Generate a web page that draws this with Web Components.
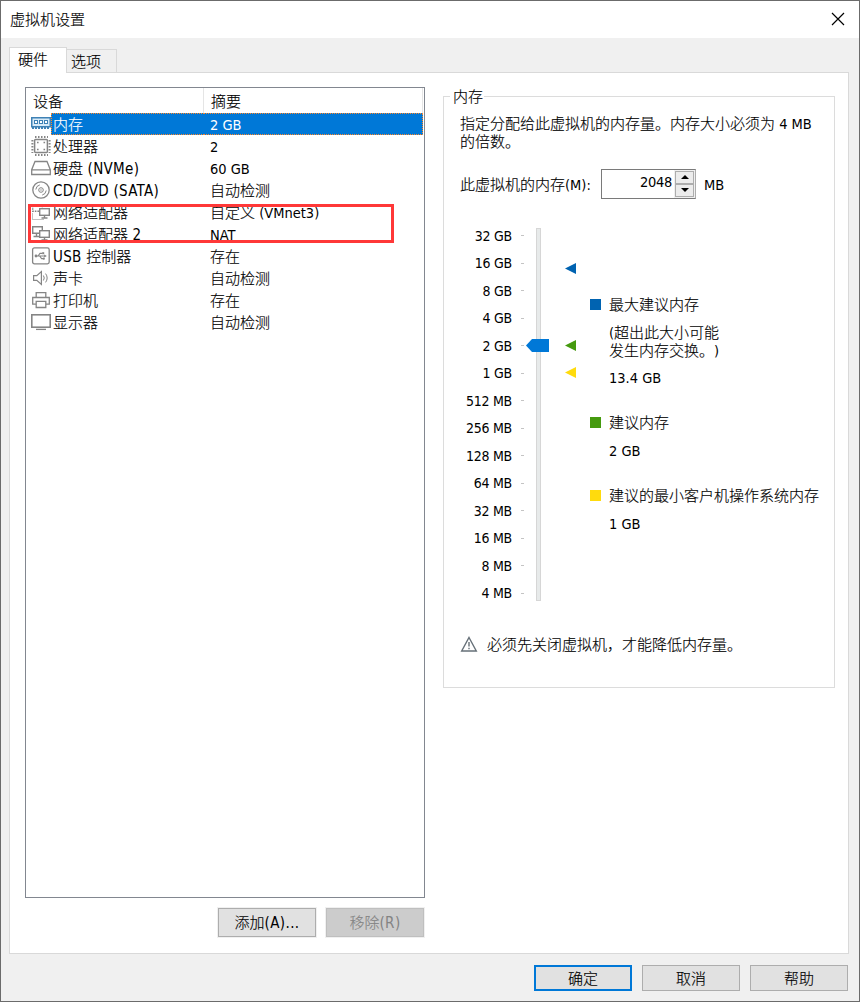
<!DOCTYPE html>
<html lang="zh-CN">
<head>
<meta charset="utf-8">
<title>虚拟机设置</title>
<style>
    html, body {
        margin: 0;
        padding: 0;
        background: #f0f0f0;
    }
    body {
        font-family: "Noto Sans CJK SC", "Noto Sans", sans-serif;
        font-size: 15px;
        line-height: 18px;
        color: #000;
        text-spacing-trim: space-all;
    }
</style>
</head>
<body>
<vm-dialog></vm-dialog>
<script>
// Latin runs use their own face next to the Chinese text
const BASE = `
    *, *::before, *::after { box-sizing: border-box; }
    .t { white-space: pre; font-weight: 300; -webkit-text-stroke: .15px currentColor; }
    .l {
        font-family: "DejaVu Sans Condensed", "DejaVu Sans", sans-serif;
        font-stretch: condensed;
        font-size: 14.5px;
        line-height: 1px;
        font-weight: 400;
        -webkit-text-stroke: 0;
    }
`;

function runs(text) {
    const inner = text.replace(/[\x20-\x7e]+/g, m => `<span class="l">${m}</span>`);
    return `<span class="t">${inner}</span>`;
}

const ICONS = {
    memory: `<rect x="0.75" y="3.75" width="18.5" height="9" fill="#d8ebf8" stroke="#3f82b5" stroke-width="1.5"/>
        <g fill="#fff" stroke="#3f82b5"><rect x="3.5" y="6.5" width="3" height="3"/><rect x="8.5" y="6.5" width="3" height="3"/><rect x="13.5" y="6.5" width="3" height="3"/></g>
        <path d="M1 14h18" stroke="#3f82b5" stroke-width="2" stroke-dasharray="2 1"/>`,
    cpu: `<rect x="3.6" y="3.6" width="12.8" height="12.8" rx="1" stroke-width="1.5"/>
        <path d="M4 1h13M4 19h13" stroke-width="2" stroke-dasharray="1.5 1.5"/>
        <path d="M1.4 4v13M18.6 4v13" stroke-width="2" stroke-dasharray="1.5 1.5"/>
        <path d="M6 6.5h1.6M12.5 6.5h1.6M6 13.5h1.6M12.5 13.5h1.6" stroke-width="1.4"/>`,
    disk: `<path d="M4 3.5h12l3.3 8.2v4.8H.7v-4.8zM.7 11.8h18.6" stroke-width="1.3"/>`,
    disc: `<circle cx="10" cy="10" r="8.2" stroke-width="1.3"/><circle cx="10" cy="10" r="2.3"/><circle cx="10" cy="10" r=".7" fill="#858585" stroke="none"/>
        <path d="M4.8 9.5a5.3 5.3 0 0 1 4-4.6M15.2 10.5a5.3 5.3 0 0 1-4 4.6"/>`,
    netOff: `<path d="M8 9.3H1.7V2.7h9.6v3.6" stroke-width="1.4" stroke-dasharray="1.6 1"/>
        <rect x="8.7" y="6.7" width="9.6" height="6.6" stroke-width="1.4"/><path d="M13.5 13.5v2M10.5 16h6" stroke-width="1.4"/>
        <path d="M1.5 11.5v6h11" stroke-dasharray="1 1"/>`,
    net: `<path d="M8 9.3H1.7V2.7h9.6v3.6" stroke-width="1.4"/><path d="M5.5 9.5v3.2M2.5 12.5H8" stroke-width="1.4"/>
        <rect x="8.7" y="6.7" width="9.6" height="6.6" stroke-width="1.4"/><path d="M13.5 13.5v2M10.5 16h6" stroke-width="1.4"/>`,
    usb: `<rect x="1.6" y="1.9" width="16.6" height="16" rx="1.8" stroke-width="1.3"/>
        <path d="M4.5 10h10M7 10l2-2.6h2.4M8.6 10l2 2.6h2" stroke-width="1.1"/><circle cx="5" cy="10" r="1.4" fill="#858585" stroke="none"/>
        <path d="M13.2 8.4L15.8 10l-2.6 1.6z" fill="#858585" stroke="none"/><rect x="11.2" y="6.2" width="2" height="2" fill="#858585" stroke="none"/><circle cx="12.8" cy="12.7" r="1.1" fill="#858585" stroke="none"/>`,
    sound: `<path d="M2.6 7.7h3.2l4.6-4.2v13L5.8 12.3H2.6z" stroke-width="1.2"/><path d="M12.4 7.5q1.7 2.5 0 5M14.6 5.6q3.1 4.4 0 8.8"/>`,
    printer: `<path d="M5.2 7.3V2.6h9.6v4.7M5 14.2H1.7V7.5h16.6v6.7H15" stroke-width="1.3"/><path d="M5.2 11.4h9.6v6.1H5.2z" stroke-width="1.3"/>`,
    display: `<rect x=".8" y="2.8" width="18.4" height="12.4" stroke-width="1.6"/><path d="M5 17.4h10" stroke-width="1.3"/>`,
};

/**
 * Web Component: <device-icon>
 */
class DeviceIcon extends HTMLElement {
    constructor() {
        super();
        this.attachShadow({ mode: 'open' });
    }

    connectedCallback() {
        this.shadowRoot.innerHTML = `
            <style>
                :host { display: block; width: 20px; height: 20px; flex: none; }
                svg { display: block; }
            </style>
            <svg width="20" height="20" viewBox="0 0 20 20" fill="none" stroke="#858585">${ICONS[this.getAttribute('name')]}</svg>
        `;
    }
}
customElements.define('device-icon', DeviceIcon);

/**
 * Web Component: <device-list>
 * Two column list of the hardware with its header.
 */
class DeviceList extends HTMLElement {
    constructor() {
        super();
        this.attachShadow({ mode: 'open' });
    }

    connectedCallback() {
        const rows = [
            ['memory', '内存', '2 GB'],
            ['cpu', '处理器', '2'],
            ['disk', '硬盘 (NVMe)', '60 GB'],
            ['disc', 'CD/DVD (SATA)', '自动检测'],
            ['netOff', '网络适配器', '自定义 (VMnet3)'],
            ['net', '网络适配器 2', 'NAT'],
            ['usb', 'USB 控制器', '存在'],
            ['sound', '声卡', '自动检测'],
            ['printer', '打印机', '存在'],
            ['display', '显示器', '自动检测'],
        ];
        this.shadowRoot.innerHTML = `
            <style>
                ${BASE}
                :host {
                    display: block;
                    position: relative;
                    box-sizing: border-box;
                    width: 400px;
                    height: 811px;
                    border: 1px solid #828790;
                    background: #fff;
                }
                .head {
                    display: grid;
                    grid-template-columns: 178px 219px;
                    height: 25px;
                    line-height: 25px;
                }
                .head div {
                    border-right: 1px solid #e5e5e5;
                    padding-left: 7px;
                }
                .row {
                    display: grid;
                    grid-template-columns: 25px 153px 1fr;
                    height: 22px;
                    line-height: 21px;
                    padding-right: 1px;
                }
                .name .l { font-size: 15px; letter-spacing: .3px; }
                device-icon { margin: 1px 0 0 5px; }
                .name { padding-left: 2px; }
                .info { padding-left: 6px; }
                .row.on .name, .row.on .info {
                    background: #0078d7;
                    color: #fff;
                    border: 1px dotted #ff8728;
                    line-height: 19px;
                }
                .row.on .name { border-right: 0; padding-left: 1px; }
                .row.on .info { border-left: 0; }
                .mark {
                    position: absolute;
                    left: 2px;
                    top: 116px;
                    width: 366px;
                    height: 39px;
                    border: 3px solid #ff3838;
                }
            </style>
            <div class="head"><div>${runs('设备')}</div><div>${runs('摘要')}</div></div>
            ${rows.map(([icon, name, info], i) => `
                <div class="row ${i === 0 ? 'on' : ''}">
                    <device-icon name="${icon}"></device-icon>
                    <div class="name">${runs(name)}</div>
                    <div class="info">${runs(info)}</div>
                </div>`).join('')}
            <div class="mark"></div>
        `;
    }
}
customElements.define('device-list', DeviceList);

/**
 * Web Component: <push-button>
 */
class PushButton extends HTMLElement {
    constructor() {
        super();
        this.attachShadow({ mode: 'open' });
    }

    connectedCallback() {
        this.shadowRoot.innerHTML = `
            <style>
                ${BASE}
                :host { display: block; width: 98px; height: 26px; }
                :host([tall]) { height: 29px; box-shadow: 0 0 0 1px #f0f0f0; }
                button {
                    display: block;
                    width: 100%;
                    height: 100%;
                    padding: 0 0 1px;
                    border: 1px solid #adadad;
                    background: #e1e1e1;
                    font: inherit;
                    color: #000;
                }
                .l { font-size: 15px; letter-spacing: .4px; }
                :host([primary]) button { border: 2px solid #0078d7; }
                button:disabled { background: #ccc; border-color: #bfbfbf; color: #838383; }
            </style>
            <button ${this.hasAttribute('disabled') ? 'disabled' : ''}>${runs(this.getAttribute('label'))}</button>
        `;
    }
}
customElements.define('push-button', PushButton);

/**
 * Web Component: <memory-scale>
 * Vertical slider with its labels and the recommendation markers.
 */
class MemoryScale extends HTMLElement {
    constructor() {
        super();
        this.attachShadow({ mode: 'open' });
    }

    connectedCallback() {
        const sizes = ['32 GB', '16 GB', '8 GB', '4 GB', '2 GB', '1 GB', '512 MB', '256 MB',
            '128 MB', '64 MB', '32 MB', '16 MB', '8 MB', '4 MB'];
        this.shadowRoot.innerHTML = `
            <style>
                ${BASE}
                :host { display: flex; height: 386px; width: 117px; position: relative; }
                .labels { width: 64px; height: 385px; display: flex; flex-direction: column; }
                .size {
                    flex: 1;
                    display: flex;
                    align-items: center;
                    justify-content: space-between;
                }
                .size .t { width: 52px; text-align: right; margin-bottom: 2px; }
                .size .l { font-size: 14px; letter-spacing: -.25px; }
                .size i { width: 3px; height: 1px; background: #c4c4c4; }
                .rail {
                    width: 5px;
                    height: 373px;
                    margin: 6px 0 0 12px;
                    border: 1px solid #d6d6d6;
                    background: #e7eaea;
                }
                svg { position: absolute; left: 66px; top: 1px; }
            </style>
            <div class="labels">${sizes.map(s => `<div class="size">${runs(s)}<i></i></div>`).join('')}</div>
            <div class="rail"></div>
            <svg width="52" height="386">
                <path d="M0 122.5L6 116h17v13H6z" fill="#0078d7"/>
                <path d="M39 45.5L50 40v11z" fill="#0063b1"/>
                <path d="M39 122.5L50 117v11z" fill="#459a0f"/>
                <path d="M39 149.5L50 144v11z" fill="#ffdb0d"/>
            </svg>
        `;
    }
}
customElements.define('memory-scale', MemoryScale);

/**
 * Web Component: <memory-panel>
 * Group box with the memory settings.
 */
class MemoryPanel extends HTMLElement {
    constructor() {
        super();
        this.attachShadow({ mode: 'open' });
    }

    connectedCallback() {
        this.shadowRoot.innerHTML = `
            <style>
                ${BASE}
                :host {
                    display: block;
                    box-sizing: border-box;
                    width: 392px;
                    height: 592px;
                    border: 1px solid #dcdcdc;
                    padding-left: 16px;
                }
                .title {
                    width: 34px;
                    height: 18px;
                    margin: -10px 0 0 -10px;
                    padding-left: 3px;
                    background: #fff;
                }
                .intro { margin-top: 9px; height: 37px; }
                .intro div { height: 18px; }
                .intro div, .item p {
                    font-family: "Liberation Sans", "Noto Sans CJK SC", sans-serif;
                    line-height: 20px;
                }
                .field { display: flex; align-items: center; height: 29px; margin-top: 18px; }
                .field > .t:first-child { width: 141px; }
                .spin {
                    display: flex;
                    width: 95px;
                    height: 30px;
                    border: 1px solid #7a7a7a;
                    border-right-color: #adadad;
                    margin-right: 8px;
                    flex: none;
                }
                .spin .t { flex: 1; text-align: right; line-height: 22px; padding-right: 2px; }
                .spin .l { letter-spacing: -.3px; }
                .arrows {
                    width: 21px;
                    padding: 1px;
                    background: #f0f0f0;
                    display: flex;
                    flex-direction: column;
                }
                .arrows span {
                    flex: 1;
                    border: 1px solid #adadad;
                    display: flex;
                    align-items: center;
                    justify-content: center;
                    background: #ececec;
                }
                .body { display: flex; height: 386px; margin-top: 24px; }
                .legend { padding: 74px 0 0 13px; }
                .item { display: grid; grid-template-columns: 19px auto; align-content: start; }
                .item b { width: 11px; height: 11px; margin-top: 3px; }
                .item > .t { margin: -1px 0 1px; }
                .item p { grid-column: 2; margin: 9px 0 0; height: 18px; }
                .item p.next { margin-top: 0; }
                .warn { display: flex; align-items: center; gap: 9px; margin-top: 27px; }
                svg { display: block; flex: none; }
            </style>
            <div class="title">${runs('内存')}</div>
            <div class="intro">
                <div>${runs('指定分配给此虚拟机的内存量。内存大小必须为 4 MB')}</div>
                <div>${runs('的倍数。')}</div>
            </div>
            <div class="field">
                ${runs('此虚拟机的内存(M):')}
                <div class="spin">
                    ${runs('2048')}
                    <div class="arrows">
                        <span><svg width="8" height="4"><path d="M4 0l4 4H0z"/></svg></span>
                        <span><svg width="8" height="4"><path d="M0 0h8L4 4z"/></svg></span>
                    </div>
                </div>
                ${runs('MB')}
            </div>
            <div class="body">
                <memory-scale></memory-scale>
                <div class="legend">
                    <div class="item" style="height: 118px">
                        <b style="background: #0063b1"></b>${runs('最大建议内存')}
                        <p>${runs('(超出此大小可能')}</p>
                        <p class="next">${runs('发生内存交换。)')}</p>
                        <p>${runs('13.4 GB')}</p>
                    </div>
                    <div class="item" style="height: 73px">
                        <b style="background: #459a0f"></b>${runs('建议内存')}
                        <p>${runs('2 GB')}</p>
                    </div>
                    <div class="item">
                        <b style="background: #ffdb0d"></b>${runs('建议的最小客户机操作系统内存')}
                        <p>${runs('1 GB')}</p>
                    </div>
                </div>
            </div>
            <div class="warn">
                <svg width="18" height="18" viewBox="0 0 18 18" fill="none" stroke="#667078" stroke-width="1.4"><path d="M9 2.5L16.3 16H1.7z"/><path d="M9 7v4.5M9 12.7v1.5"/></svg>
                ${runs('必须先关闭虚拟机，才能降低内存量。')}
            </div>
        `;
    }
}
customElements.define('memory-panel', MemoryPanel);

/**
 * Web Component: <vm-dialog>
 * The window: title bar, tabs, page and footer buttons.
 */
class VmDialog extends HTMLElement {
    constructor() {
        super();
        this.attachShadow({ mode: 'open' });
        this.shadowRoot.innerHTML = `
            <style>
                ${BASE}
                :host {
                    display: flex;
                    flex-direction: column;
                    box-sizing: border-box;
                    width: 860px;
                    height: 1002px;
                    border: 1px solid #6b6b6b;
                    background: #f0f0f0;
                }
                .bar {
                    display: flex;
                    align-items: center;
                    justify-content: space-between;
                    height: 37px;
                    padding: 0 14px 1px 9px;
                    background: #fff;
                }
                .tabs { display: flex; align-items: flex-end; height: 34px; padding: 0 8px; }
                .tab {
                    height: 23px;
                    width: 50px;
                    padding-left: 4px;
                    line-height: 22px;
                    border: 1px solid #d9d9d9;
                    border-left: 0;
                    border-bottom: 0;
                }
                .tab.on {
                    width: 58px;
                    height: 26px;
                    padding-left: 8px;
                    line-height: 22px;
                    background: #fff;
                    border-left: 1px solid #d9d9d9;
                    margin-bottom: -1px;
                    z-index: 1;
                }
                .page {
                    display: flex;
                    height: 882px;
                    width: 840px;
                    margin-left: 8px;
                    padding: 14px 0 0 15px;
                    background: #fff;
                    border: 1px solid #d9d9d9;
                }
                .left { width: 400px; }
                .actions { display: flex; justify-content: flex-end; gap: 10px; margin: 10px 1px 0 0; }
                memory-panel { margin: 9px 0 0 18px; }
                .footer { display: flex; justify-content: flex-end; gap: 10px; padding: 11px 11px 0 0; }
            </style>
            <div class="bar">
                ${runs('虚拟机设置')}
                <svg width="14" height="14" stroke="#000" stroke-width="1.2"><path d="M1 1l12 12M13 1L1 13"/></svg>
            </div>
            <div class="tabs">
                <div class="tab on">${runs('硬件')}</div>
                <div class="tab">${runs('选项')}</div>
            </div>
            <div class="page">
                <div class="left">
                    <device-list></device-list>
                    <div class="actions">
                        <push-button tall label="添加(A)..."></push-button>
                        <push-button tall disabled label="移除(R)"></push-button>
                    </div>
                </div>
                <memory-panel></memory-panel>
            </div>
            <div class="footer">
                <push-button primary label="确定"></push-button>
                <push-button label="取消"></push-button>
                <push-button label="帮助"></push-button>
            </div>
        `;
    }
}
customElements.define('vm-dialog', VmDialog);
</script>
</body>
</html>
